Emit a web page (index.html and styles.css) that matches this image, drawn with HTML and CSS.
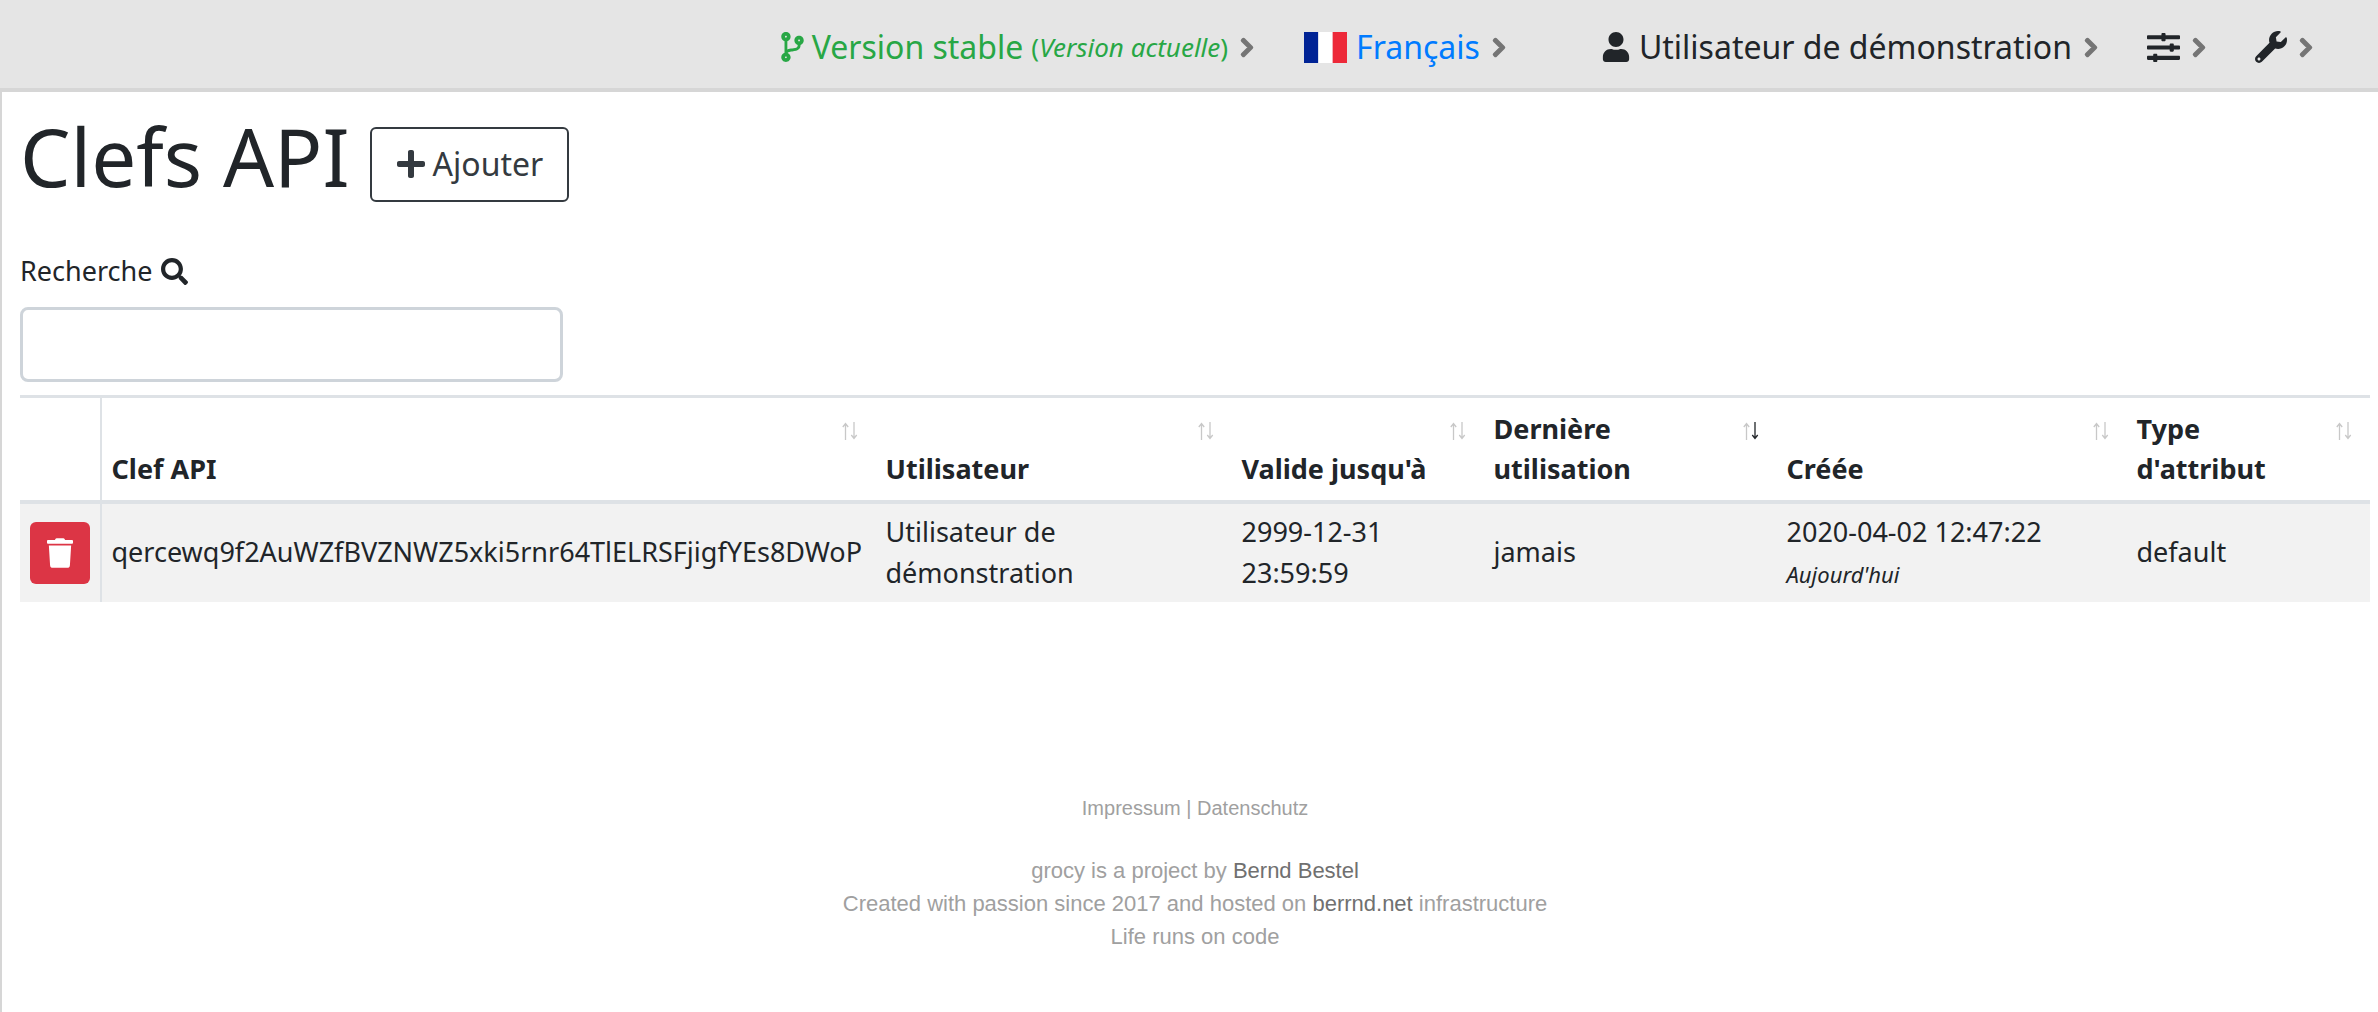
FILE: index.html
```html
<!DOCTYPE html>
<html lang="fr">
<head>
<meta charset="utf-8">
<title>Clefs API</title>
<link rel="stylesheet" href="styles.css">
</head>
<body>
<svg class="defs" width="0" height="0">
  <symbol id="sort" viewBox="0 0 18 18">
    <path d="M4.5 18V2M1.8 5 4.5 1.5 7.200 5" fill="none" stroke="currentColor" stroke-width="1.300"/>
  </symbol>
  <symbol id="sort-down" viewBox="0 0 18 18">
    <path d="M13 0V16M10.300 13 13 16.500 15.700 13" fill="none" stroke="currentColor" stroke-width="1.300"/>
  </symbol>
</svg>
<header class="topbar">
  <a class="nav-item nav-version">
    <svg class="ico ico-branch" viewBox="0 0 384 512"><path d="M384 144c0-44.200-35.800-80-80-80s-80 35.800-80 80c0 36.400 24.300 67.100 57.500 76.800-.6 16.100-4.200 28.500-11 36.900-15.400 19.200-49.300 22.400-85.200 25.700-28.200 2.600-57.400 5.400-81.300 16.900v-144c32.500-10.200 56-40.500 56-76.300 0-44.200-35.800-80-80-80S0 35.800 0 80c0 35.800 23.500 66.100 56 76.300v199.300C23.500 365.900 0 396.200 0 432c0 44.200 35.800 80 80 80s80-35.800 80-80c0-34-21.200-63.100-51.200-74.600 3.100-5.200 7.800-9.800 14.900-13.400 16.200-8.200 40.400-10.400 66.100-12.800 42.200-3.900 90-8.400 118.200-43.400 14-17.400 21.100-39.800 21.600-67.900 31.600-10.800 54.400-40.700 54.400-76.300zM80 64c8.800 0 16 7.200 16 16s-7.200 16-16 16-16-7.200-16-16 7.200-16 16-16zm0 384c-8.800 0-16-7.200-16-16s7.200-16 16-16 16 7.200 16 16-7.200 16-16 16zm224-320c8.800 0 16 7.200 16 16s-7.200 16-16 16-16-7.200-16-16 7.200-16 16-16z"/></svg>
    <span>Version stable</span>
    <small class="nav-note">(<em>Version actuelle</em>)</small>
    <svg class="chev" viewBox="0 0 320 512"><path d="M285.476 272.971L91.132 467.314c-9.373 9.373-24.569 9.373-33.941 0l-22.667-22.667c-9.357-9.357-9.375-24.522-.04-33.901L188.505 256 34.484 101.255c-9.335-9.379-9.317-24.544.04-33.901l22.667-22.667c9.373-9.373 24.569-9.373 33.941 0L285.475 239.030c9.373 9.372 9.373 24.568.001 33.941z"/></svg>
  </a>
  <a class="nav-item nav-lang">
    <svg class="flag" viewBox="0 0 3 2" preserveAspectRatio="none"><rect width="1" height="2" fill="#002395"/><rect x="1" width="1" height="2" fill="#fff"/><rect x="2" width="1" height="2" fill="#ed2939"/></svg>
    <span>Français</span>
    <svg class="chev" viewBox="0 0 320 512"><path d="M285.476 272.971L91.132 467.314c-9.373 9.373-24.569 9.373-33.941 0l-22.667-22.667c-9.357-9.357-9.375-24.522-.04-33.901L188.505 256 34.484 101.255c-9.335-9.379-9.317-24.544.04-33.901l22.667-22.667c9.373-9.373 24.569-9.373 33.941 0L285.475 239.030c9.373 9.372 9.373 24.568.001 33.941z"/></svg>
  </a>
  <a class="nav-item nav-user">
    <svg class="ico ico-user" viewBox="0 0 448 512"><path d="M224 256c70.700 0 128-57.300 128-128S294.700 0 224 0 96 57.300 96 128s57.300 128 128 128zm89.600 32h-16.700c-22.200 10.200-46.900 16-72.900 16s-50.600-5.800-72.900-16h-16.700C60.200 288 0 348.200 0 422.400V464c0 26.500 21.500 48 48 48h352c26.500 0 48-21.500 48-48v-41.600c0-74.200-60.200-134.400-134.400-134.400z"/></svg>
    <span>Utilisateur de démonstration</span>
    <svg class="chev" viewBox="0 0 320 512"><path d="M285.476 272.971L91.132 467.314c-9.373 9.373-24.569 9.373-33.941 0l-22.667-22.667c-9.357-9.357-9.375-24.522-.04-33.901L188.505 256 34.484 101.255c-9.335-9.379-9.317-24.544.04-33.901l22.667-22.667c9.373-9.373 24.569-9.373 33.941 0L285.475 239.030c9.373 9.372 9.373 24.568.001 33.941z"/></svg>
  </a>
  <a class="nav-item nav-settings">
    <svg class="ico ico-sliders" viewBox="0 0 512 512"><path d="M496 384H160v-16c0-8.800-7.200-16-16-16h-32c-8.800 0-16 7.200-16 16v16H16c-8.800 0-16 7.200-16 16v32c0 8.800 7.200 16 16 16h80v16c0 8.800 7.200 16 16 16h32c8.800 0 16-7.200 16-16v-16h336c8.800 0 16-7.200 16-16v-32c0-8.800-7.200-16-16-16zm0-160h-80v-16c0-8.800-7.200-16-16-16h-32c-8.800 0-16 7.200-16 16v16H16c-8.800 0-16 7.200-16 16v32c0 8.800 7.200 16 16 16h336v16c0 8.800 7.200 16 16 16h32c8.800 0 16-7.200 16-16v-16h80c8.800 0 16-7.200 16-16v-32c0-8.800-7.200-16-16-16zm0-160H288V48c0-8.800-7.200-16-16-16h-32c-8.800 0-16 7.200-16 16v16H16C7.200 64 0 71.200 0 80v32c0 8.800 7.200 16 16 16h208v16c0 8.800 7.200 16 16 16h32c8.800 0 16-7.200 16-16v-16h208c8.800 0 16-7.200 16-16V80c0-8.800-7.200-16-16-16z"/></svg>
    <svg class="chev" viewBox="0 0 320 512"><path d="M285.476 272.971L91.132 467.314c-9.373 9.373-24.569 9.373-33.941 0l-22.667-22.667c-9.357-9.357-9.375-24.522-.04-33.901L188.505 256 34.484 101.255c-9.335-9.379-9.317-24.544.04-33.901l22.667-22.667c9.373-9.373 24.569-9.373 33.941 0L285.475 239.030c9.373 9.372 9.373 24.568.001 33.941z"/></svg>
  </a>
  <a class="nav-item nav-tools">
    <svg class="ico ico-wrench" viewBox="0 0 512 512"><path d="M507.730 109.100c-2.240-9.030-13.540-12.090-20.120-5.510l-74.360 74.360-67.880-11.310-11.310-67.880 74.360-74.360c6.620-6.620 3.430-17.900-5.660-20.160-47.380-11.740-99.550.91-136.580 37.930-39.640 39.640-50.550 97.100-34.050 147.200L18.740 402.760c-24.990 24.990-24.990 65.510 0 90.500 24.990 24.990 65.510 24.990 90.500 0l213.210-213.210c50.120 16.710 107.470 5.680 147.370-34.220 37.070-37.070 49.700-89.320 37.910-136.730zM64 472c-13.250 0-24-10.750-24-24 0-13.260 10.750-24 24-24s24 10.740 24 24c0 13.250-10.750 24-24 24z"/></svg>
    <svg class="chev" viewBox="0 0 320 512"><path d="M285.476 272.971L91.132 467.314c-9.373 9.373-24.569 9.373-33.941 0l-22.667-22.667c-9.357-9.357-9.375-24.522-.04-33.901L188.505 256 34.484 101.255c-9.335-9.379-9.317-24.544.04-33.901l22.667-22.667c9.373-9.373 24.569-9.373 33.941 0L285.475 239.030c9.373 9.372 9.373 24.568.001 33.941z"/></svg>
  </a>
</header>
<main class="content">
  <div class="title-row">
    <h1 class="title">Clefs API</h1>
    <a class="btn-add">
      <svg class="ico-plus" viewBox="0 0 448 512"><path d="M416 208H272V64c0-17.670-14.330-32-32-32h-32c-17.670 0-32 14.330-32 32v144H32c-17.670 0-32 14.330-32 32v32c0 17.670 14.330 32 32 32h144v144c0 17.670 14.330 32 32 32h32c17.670 0 32-14.330 32-32V304h144c17.670 0 32-14.330 32-32v-32c0-17.670-14.330-32-32-32z"/></svg>
      <span>Ajouter</span>
    </a>
  </div>
  <label class="search-label" for="search">
    <span>Recherche</span>
    <svg class="ico-search" viewBox="0 0 512 512"><path d="M505 442.700L405.300 343c-4.500-4.500-10.600-7-17-7H372c27.600-35.300 44-79.700 44-128C416 93.100 322.900 0 208 0S0 93.100 0 208s93.100 208 208 208c48.300 0 92.700-16.400 128-44v16.300c0 6.400 2.500 12.500 7 17l99.700 99.700c9.400 9.400 24.600 9.400 33.900 0l28.300-28.300c9.400-9.400 9.400-24.600.1-34zM208 336c-70.700 0-128-57.200-128-128 0-70.700 57.200-128 128-128 70.700 0 128 57.200 128 128 0 70.700-57.200 128-128 128z"/></svg>
  </label>
  <input class="search-input" id="search" type="text">
  <table class="keys">
    <colgroup>
      <col class="c-act"><col class="c-key"><col class="c-user"><col class="c-valid"><col class="c-last"><col class="c-created"><col class="c-type">
    </colgroup>
    <thead>
      <tr>
        <th class="act"></th>
        <th>Clef API<svg class="sort"><use href="#sort"/><use href="#sort-down"/></svg></th>
        <th>Utilisateur<svg class="sort"><use href="#sort"/><use href="#sort-down"/></svg></th>
        <th>Valide jusqu'à<svg class="sort"><use href="#sort"/><use href="#sort-down"/></svg></th>
        <th>Dernière utilisation<svg class="sort"><use href="#sort"/><use class="sort-active" href="#sort-down"/></svg></th>
        <th>Créée<svg class="sort"><use href="#sort"/><use href="#sort-down"/></svg></th>
        <th>Type d'attribut<svg class="sort"><use href="#sort"/><use href="#sort-down"/></svg></th>
      </tr>
    </thead>
    <tbody>
      <tr>
        <td class="act">
          <a class="btn-del"><svg class="ico-trash" viewBox="0 0 448 512"><path d="M432 32H312l-9.400-18.700A24 24 0 0 0 281.100 0H166.800a23.720 23.720 0 0 0-21.400 13.300L136 32H16A16 16 0 0 0 0 48v32a16 16 0 0 0 16 16h416a16 16 0 0 0 16-16V48a16 16 0 0 0-16-16zM53.200 467a48 48 0 0 0 47.900 45h245.800a48 48 0 0 0 47.900-45L416 128H32z"/></svg></a>
        </td>
        <td>qercewq9f2AuWZfBVZNWZ5xki5rnr64TlELRSFjigfYEs8DWoP</td>
        <td>Utilisateur de démonstration</td>
        <td>2999-12-31 23:59:59</td>
        <td>jamais</td>
        <td>2020-04-02 12:47:22<br><time class="rel">Aujourd'hui</time></td>
        <td>default</td>
      </tr>
    </tbody>
  </table>
  <footer class="foot">
    <p class="foot-links">Impressum | Datenschutz</p>
    <p>grocy is a project by <a>Bernd Bestel</a></p>
    <p>Created with passion since 2017 and hosted on <a>berrnd.net</a> infrastructure</p>
    <p>Life runs on code</p>
  </footer>
</main>
</body>
</html>
```
FILE: styles.css
```css
* { box-sizing: border-box; }
html, body { margin: 0; height: 100%; }
body {
  font-family: "Noto Sans", sans-serif;
  font-size: 27px;
  line-height: 1.5;
  color: #212529;
  background: #fff;
  display: flex;
  flex-direction: column;
}
.defs { position: absolute; }

.topbar {
  height: 92px;
  flex: none;
  background: #e5e5e5;
  border-bottom: 4px solid #d6d6d6;
  display: flex;
  align-items: center;
  justify-content: flex-end;
  padding: 6px 62px 0 0;
  font-size: 32px;
}
.nav-item { display: flex; align-items: center; white-space: nowrap; }
.ico { fill: currentColor; flex: none; height: 30px; }
.ico-branch { width: 25px; margin-right: 7px; }
.ico-user { width: 28px; margin-right: 9px; }
.ico-sliders { width: 33px; height: 33px; }
.ico-wrench { width: 32px; height: 32px; }
.chev {
  width: 14px;
  height: 21px;
  margin: 0 3px 0 12px;
  flex: none;
  fill: #757575;
  stroke: #757575;
  stroke-width: 40px;
  overflow: visible;
}
.nav-version { color: #28a745; margin-right: 47px; }
.nav-note { font-size: 26px; margin-left: 8px; }
.flag { width: 43px; height: 31px; margin-right: 9px; }
.nav-lang { color: #007bff; margin-right: 93px; }
.nav-user { margin-right: 46px; }
.nav-settings { margin-right: 46px; }

.content {
  flex: 1;
  border-left: 2px solid #d6d6d6;
  padding: 0 8px 0 18px;
}
.title-row { display: flex; align-items: center; margin-top: 27px; gap: 20px; height: 90px; }
.title { margin: 0 0 16px; font-size: 80px; font-weight: 400; line-height: 1.2; }
.btn-add {
  display: flex;
  align-items: center;
  gap: 8px;
  width: 199px;
  height: 75px;
  padding-left: 25px;
  border: 2px solid #343a40;
  border-radius: 6px;
  font-size: 32px;
  color: #343a40;
}
.ico-plus { width: 28px; height: 32px; fill: currentColor; }
.search-label { display: flex; align-items: center; gap: 9px; margin-top: 42px; height: 41px; }
.ico-search { width: 27px; height: 27px; fill: currentColor; }
.search-input {
  display: block;
  width: 543px;
  height: 75px;
  margin-top: 15px;
  border: 3px solid #ced4da;
  border-radius: 8px;
  background: #fff;
}
.keys {
  width: 2350px;
  margin-top: 13px;
  border-collapse: collapse;
  table-layout: fixed;
}
.c-act { width: 81px; }
.c-key { width: 775px; }
.c-user { width: 356px; }
.c-valid { width: 252px; }
.c-last { width: 293px; }
.c-created { width: 350px; }
.c-type { width: 243px; }
.keys th, .keys td { padding: 0 10px 0 9.5px; }
.keys th {
  position: relative;
  height: 105px;
  padding-right: 40px;
  padding-bottom: 10px;
  vertical-align: bottom;
  text-align: left;
  font-weight: 700;
  border-top: 3px solid #dee2e6;
  border-bottom: 4px solid #dee2e6;
}
.keys td { height: 100px; background: #f2f2f2; vertical-align: middle; }
.keys .act { border-right: 2px solid #dee2e6; padding: 0 10px; }
.sort { position: absolute; top: 24px; right: 17px; width: 18px; height: 18px; color: #c8c8c8; }
.sort-active { color: #212529; }
.btn-del {
  display: flex;
  align-items: center;
  justify-content: center;
  width: 60px;
  height: 62px;
  background: #dc3545;
  border-radius: 6px;
}
.ico-trash { width: 26px; height: 30px; fill: #fff; }
.rel { font-size: 22px; font-style: italic; }

.foot {
  margin-top: 190px;
  text-align: center;
  font-family: "Liberation Sans", Arial, sans-serif;
  font-size: 22px;
  line-height: 33px;
  color: #a0a0a0;
}
.foot p { margin: 0; }
.foot a { color: #707070; }
.foot-links { font-size: 20px; margin-bottom: 29px !important; }
```
